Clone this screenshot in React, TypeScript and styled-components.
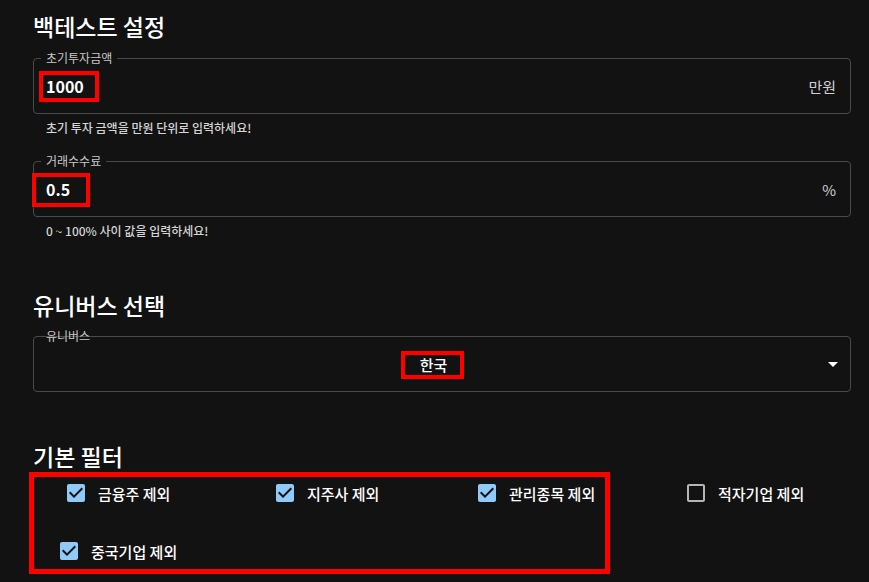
import React from 'react'
import styled, { createGlobalStyle } from 'styled-components'

const GlobalStyle = createGlobalStyle`
  body {
    margin: 0;
    background: #121212;
    color: #fff;
    font-family: "Noto Sans CJK KR", "Noto Sans", sans-serif;
  }
`

const Page = styled.main`
  box-sizing: border-box;
  min-height: 582px;
  padding: 8px 18px 0 33px;
`

const Heading = styled.h2<{ $gap: number }>`
  margin: ${(p) => p.$gap}px 0 0;
  font-size: 23px;
  font-weight: 500;
  line-height: 36px;
  color: #fff;
`

const Field = styled.div<{ $gap: number }>`
  position: relative;
  box-sizing: border-box;
  display: flex;
  align-items: center;
  height: 56px;
  margin-top: ${(p) => p.$gap}px;
  padding: 0 14px 0 12px;
  border: 1px solid #4a4a4a;
  border-radius: 4px;
`

const SelectField = styled(Field)`
  padding: 0 5px 0 12px;
`

const FieldLabel = styled.span<{ $notch?: boolean }>`
  position: absolute;
  top: -9px;
  left: 7px;
  padding: 0 5px;
  font-size: 12px;
  line-height: 16px;
  color: #c8c8c8;
  background: ${(p) => (p.$notch ? '#121212' : 'transparent')};
`

const Value = styled.span`
  flex: 1;
  font-size: 16px;
  font-weight: 600;
  color: #fff;
`

const SelectValue = styled.span`
  flex: 1;
  text-align: center;
  font-size: 15px;
  font-weight: 500;
  color: #fff;
`

const Suffix = styled.span`
  font-size: 15px;
  color: #cfcfcf;
`

const Helper = styled.p`
  margin: 5px 0 0 13px;
  font-size: 12px;
  font-weight: 500;
  line-height: 18px;
  color: #d4d4d4;
`

// red annotation boxes drawn over the screenshot
const Mark = styled.div<{ $x: number; $y: number; $w: number; $h: number; $t: number }>`
  position: absolute;
  left: ${(p) => p.$x}px;
  top: ${(p) => p.$y}px;
  width: ${(p) => p.$w}px;
  height: ${(p) => p.$h}px;
  box-sizing: border-box;
  border: ${(p) => p.$t}px solid #ff0000;
  pointer-events: none;
`

const Filters = styled.div`
  position: relative;
  display: grid;
  grid-template-columns: 209px 202px 209px 1fr;
  grid-auto-rows: 36px;
  row-gap: 22px;
  margin-top: 1px;
  padding-left: 31px;
`

const FilterItem = styled.label<{ $shift?: number }>`
  display: flex;
  align-items: center;
  margin-left: ${(p) => p.$shift ?? 0}px;
  font-size: 15px;
  font-weight: 500;
  color: #fff;
  cursor: pointer;
`

const Box = styled.svg<{ $on: boolean }>`
  width: 24px;
  height: 24px;
  margin-right: 10px;
  fill: ${(p) => (p.$on ? '#90caf9' : '#b5b5b5')};
`

const Arrow = styled.svg`
  width: 24px;
  height: 24px;
  fill: #fff;
`

function Check({ on }: { on: boolean }) {
  return (
    <Box $on={on} viewBox="0 0 24 24">
      {on ? (
        <path d="M19 3H5c-1.11 0-2 .9-2 2v14c0 1.1.89 2 2 2h14c1.11 0 2-.9 2-2V5c0-1.1-.89-2-2-2zm-9 14l-5-5 1.41-1.41L10 14.17l7.59-7.59L19 8l-9 9z" />
      ) : (
        <path d="M19 5v14H5V5h14m0-2H5c-1.1 0-2 .9-2 2v14c0 1.1.9 2 2 2h14c1.1 0 2-.9 2-2V5c0-1.1-.9-2-2-2z" />
      )}
    </Box>
  )
}

const filters = [
  { label: '금융주 제외', on: true },
  { label: '지주사 제외', on: true },
  { label: '관리종목 제외', on: true },
  { label: '적자기업 제외', on: false },
  { label: '중국기업 제외', on: true, shift: -7 },
]

export default function App() {
  return (
    <>
      <GlobalStyle />
      <Page>
        <Heading $gap={0}>백테스트 설정</Heading>

        <Field $gap={14}>
          <FieldLabel $notch>초기투자금액</FieldLabel>
          <Value>1000</Value>
          <Suffix>만원</Suffix>
          <Mark $x={5} $y={12} $w={60} $h={31} $t={4} />
        </Field>
        <Helper>초기 투자 금액을 만원 단위로 입력하세요!</Helper>

        <Field $gap={24}>
          <FieldLabel $notch>거래수수료</FieldLabel>
          <Value>0.5</Value>
          <Suffix>%</Suffix>
          <Mark $x={-2} $y={11} $w={58} $h={34} $t={4} />
        </Field>
        <Helper>0 ~ 100% 사이 값을 입력하세요!</Helper>

        <Heading $gap={47}>유니버스 선택</Heading>

        <SelectField $gap={13}>
          <FieldLabel>유니버스</FieldLabel>
          <SelectValue>한국</SelectValue>
          <Arrow viewBox="0 0 24 24">
            <path d="M7 10l5 5 5-5z" />
          </Arrow>
          <Mark $x={367} $y={14} $w={63} $h={28} $t={4} />
        </SelectField>

        <Heading $gap={46}>기본 필터</Heading>

        <Filters>
          {filters.map((f) => (
            <FilterItem key={f.label} $shift={f.shift}>
              <Check on={f.on} />
              {f.label}
            </FilterItem>
          ))}
          <Mark $x={-4} $y={-3} $w={581} $h={102} $t={5} />
        </Filters>
      </Page>
    </>
  )
}
